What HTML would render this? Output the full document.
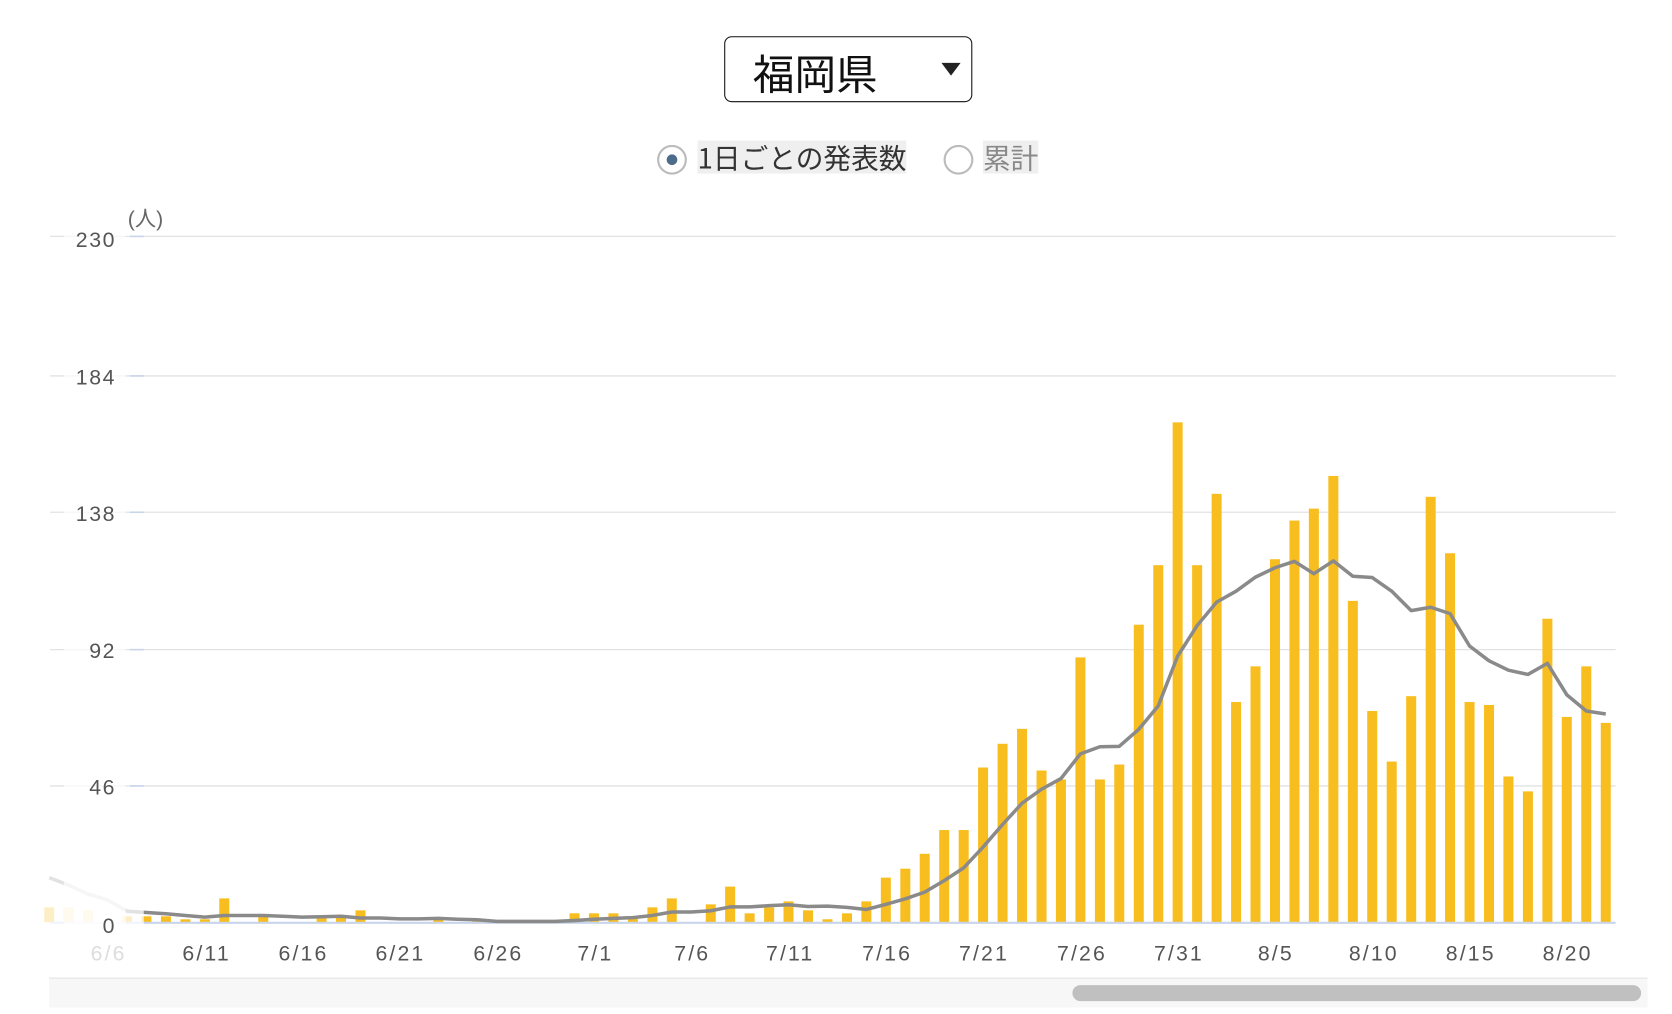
<!DOCTYPE html>
<html><head><meta charset="utf-8"><style>
html,body{margin:0;padding:0;background:#fff;overflow:hidden;width:1672px;height:1014px}
#w{position:absolute;left:0;top:0;width:1570px;height:952px;transform:scale(1.06497);transform-origin:0 0;font-family:"Liberation Sans","Noto Sans CJK JP",sans-serif}
.sel{position:absolute;left:680px;top:34px;width:233px;height:62px;border:1.5px solid #111;border-radius:7px;box-sizing:border-box}
.sel span{position:absolute;left:26px;top:5px;font-size:39px;color:#111;font-family:"Noto Sans CJK JP",sans-serif}
.sel i{position:absolute;left:203px;top:24px;width:0;height:0;border-left:9px solid transparent;border-right:9px solid transparent;border-top:12px solid #222}
.rad{position:absolute;top:136px;width:28px;height:28px;border:2px solid #bbb;border-radius:50%;box-sizing:border-box}
.lab{position:absolute;top:132px;font-size:26px;background:#efefef;line-height:31px;font-family:"Noto Sans CJK JP",sans-serif}
</style></head><body><div id="w">
<div class="sel"><span>福岡県</span><i></i></div>
<div class="rad" style="left:617px"><div style="position:absolute;left:7px;top:7px;width:10px;height:10px;border-radius:50%;background:#4d6c8c"></div></div>
<div class="lab" style="left:655px;color:#333">1日ごとの発表数</div>
<div class="rad" style="left:886px"></div>
<div class="lab" style="left:923px;color:#888">累計</div>
<svg id="c" width="1570" height="952" style="position:absolute;left:0;top:0" font-family="Liberation Sans, Noto Sans CJK JP, sans-serif">
<g stroke="#e2e2e2" stroke-width="1.2">
<line x1="47" y1="222" x2="1517" y2="222"/><line x1="47" y1="353" x2="1517" y2="353"/><line x1="47" y1="481" x2="1517" y2="481"/><line x1="47" y1="610" x2="1517" y2="610"/><line x1="47" y1="738" x2="1517" y2="738"/>
</g>
<g stroke="#c8d4ea" stroke-width="1.5">
<line x1="122" y1="222" x2="135" y2="222"/><line x1="122" y1="353" x2="135" y2="353"/><line x1="122" y1="481" x2="135" y2="481"/><line x1="122" y1="610" x2="135" y2="610"/><line x1="122" y1="738" x2="135" y2="738"/>
</g>
<g id="bars" fill="#f8bd1e"></g>
<line x1="47" y1="866.5" x2="1517" y2="866.5" stroke="#c8d4ea" stroke-width="2"/>
<polyline id="ln" fill="none" stroke="#8a8a8a" stroke-width="3.3" stroke-linejoin="round"/>
<rect x="40" y="780" width="95" height="100" fill="#fff" opacity="0.75"/>
<rect x="60" y="205" width="58" height="670" fill="#fff" opacity="0.7"/>
<g font-size="20" fill="#555" text-anchor="end" letter-spacing="1.5">
<text x="109" y="232">230</text><text x="109" y="361">184</text><text x="109" y="489">138</text><text x="109" y="618">92</text><text x="109" y="746">46</text><text x="109" y="876">0</text>
</g>
<text x="120" y="212" font-size="20" fill="#666">(人)</text>
<g font-size="20" fill="#555" text-anchor="middle" letter-spacing="2">
<text x="102" y="902" fill="#ddd">6/6</text><text x="194" y="902">6/11</text><text x="285" y="902">6/16</text><text x="376" y="902">6/21</text><text x="468" y="902">6/26</text><text x="559" y="902">7/1</text><text x="650" y="902">7/6</text><text x="742" y="902">7/11</text><text x="833" y="902">7/16</text><text x="924" y="902">7/21</text><text x="1016" y="902">7/26</text><text x="1107" y="902">7/31</text><text x="1198" y="902">8/5</text><text x="1290" y="902">8/10</text><text x="1381" y="902">8/15</text><text x="1472" y="902">8/20</text>
</g>
<rect x="46" y="918" width="1501" height="28" fill="#f7f7f7"/>
<line x1="46" y1="918.5" x2="1547" y2="918.5" stroke="#e6e6e6"/>
<rect x="1007" y="925" width="534" height="15" rx="7.5" fill="#c0c0c0"/>
</svg>
</div>
<script>
var v={"-3":5,"-2":5,"-1":4,0:0,1:2,2:2,3:2,4:1,5:1,6:8,8:2,11:2,12:2,13:4,17:1,19:1,24:3,25:3,26:3,27:2,28:5,29:8,31:6,32:12,33:3,34:5,35:7,36:4,37:1,38:3,39:7,40:15,41:18,42:23,43:31,44:31,45:52,46:60,47:65,48:51,49:48,50:89,51:48,52:53,53:100,54:120,55:168,56:120,57:144,58:74,59:86,60:122,61:135,62:139,63:150,64:108,65:71,66:54,67:76,68:143,69:124,70:74,71:73,72:49,73:44,74:102,75:69,76:86,77:67};
function g(d){return v[d]||0}
var s=2.794,b="",pts=[];
for(var d=-3;d<=77;d++){var x=101+18.27*d,h=g(d)*s;if(h>0)b+='<rect x="'+(x-4.7).toFixed(1)+'" y="'+(866-h).toFixed(1)+'" width="9.4" height="'+h.toFixed(1)+'"/>';}
document.getElementById("bars").innerHTML=b;
var pre={"-3":15,"-2":12.5,"-1":9.5,0:7.5};
for(var d=-3;d<=77;d++){var a;if(pre[d]!==undefined)a=pre[d];else{var t=0;for(var j=d-6;j<=d;j++)t+=(j<-3?5:g(j));a=t/7;}pts.push((101+18.27*d).toFixed(1)+","+(866-a*s).toFixed(1));}
document.getElementById("ln").setAttribute("points",pts.join(" "));
</script>
</body></html>
